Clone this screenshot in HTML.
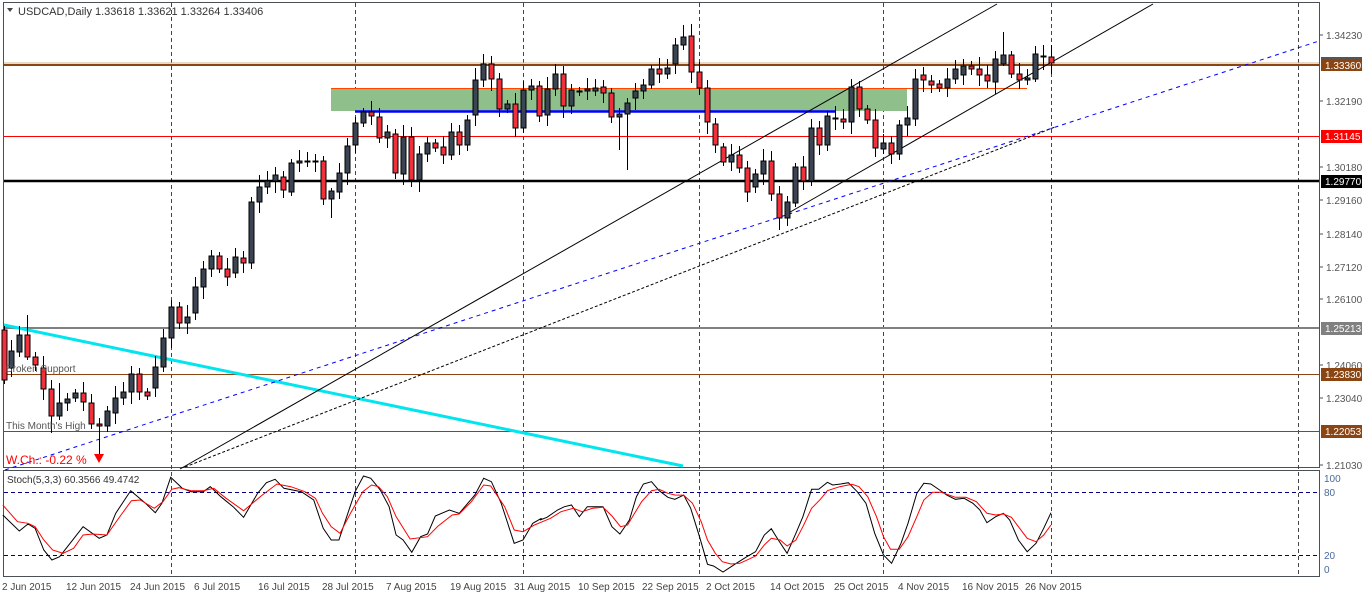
<!DOCTYPE html>
<html><head><meta charset="utf-8"><style>
html,body{margin:0;padding:0;background:#fff;}
svg{display:block;font-family:"Liberation Sans",sans-serif;}
</style></head><body>
<svg id="s" width="1362" height="594" viewBox="0 0 1362 594" xmlns="http://www.w3.org/2000/svg">
<rect width="1362" height="594" fill="#fff"/>
<rect x="3.5" y="2.5" width="1316" height="465" fill="none" stroke="#4a5058"/>
<rect x="3.5" y="470.5" width="1316" height="106" fill="none" stroke="#4a5058"/>
<g stroke="#444" stroke-dasharray="4,3" stroke-width="1">
<line x1="171.5" y1="3" x2="171.5" y2="576"/><line x1="355.5" y1="3" x2="355.5" y2="576"/>
<line x1="523.5" y1="3" x2="523.5" y2="576"/><line x1="699.5" y1="3" x2="699.5" y2="576"/>
<line x1="883.5" y1="3" x2="883.5" y2="576"/><line x1="1051.5" y1="3" x2="1051.5" y2="576"/>
<line x1="1298.5" y1="3" x2="1298.5" y2="576"/>
</g>
<rect x="331" y="88" width="576" height="23" fill="#8fbf8a"/>
<line x1="331" y1="88.5" x2="1027" y2="88.5" stroke="#ff4500" stroke-width="1"/>
<line x1="355" y1="111.5" x2="836" y2="111.5" stroke="#0000ff" stroke-width="2.5"/>
<line x1="4" y1="63" x2="1319" y2="63" stroke="#d2b48c" stroke-width="1"/>
<line x1="4" y1="65" x2="1319" y2="65" stroke="#8b4513" stroke-width="2"/>
<line x1="4" y1="136.5" x2="1319" y2="136.5" stroke="#ff0000" stroke-width="1"/>
<line x1="4" y1="181" x2="1319" y2="181" stroke="#000" stroke-width="2.5"/>
<line x1="4" y1="328" x2="1319" y2="328" stroke="#808080" stroke-width="2"/>
<line x1="4" y1="374.5" x2="1319" y2="374.5" stroke="#8b4513" stroke-width="1"/>
<line x1="4" y1="431.5" x2="1319" y2="431.5" stroke="#8b4513" stroke-width="1"/>
<line x1="4" y1="325" x2="683" y2="466" stroke="#00e5ee" stroke-width="3"/>
<line x1="180" y1="469" x2="997" y2="4" stroke="#000" stroke-width="1"/>
<line x1="785" y1="215" x2="1153" y2="4" stroke="#000" stroke-width="1"/>
<line x1="185" y1="467" x2="1055" y2="127" stroke="#000" stroke-width="1" stroke-dasharray="3,2"/>
<line x1="5" y1="470" x2="1319" y2="41" stroke="#0000ff" stroke-width="1" stroke-dasharray="4,4"/>
<g id="candles"></g>
<path d="M7 8 L13 8 L10 12 Z" fill="#444"/>
<text x="18" y="15" font-size="11" fill="#333">USDCAD,Daily  1.33618 1.33621 1.33264 1.33406</text>
<text x="6" y="372" font-size="10" fill="#555">Broken Support</text>
<text x="6" y="429" font-size="10" fill="#555">This Month's High</text>
<line x1="99.5" y1="424" x2="99.5" y2="456" stroke="#000" stroke-width="1"/>
<path d="M94 454 L104 454 L99 463 Z" fill="#ff0000"/>
<text x="6" y="464" font-size="12" fill="#ff0000">W.Ch.: -0.22 %</text>
<g font-size="10" fill="#555">
<text x="1326" y="39">1.34230</text><text x="1326" y="105">1.32190</text>
<text x="1326" y="171">1.30180</text><text x="1326" y="204">1.29160</text>
<text x="1326" y="238">1.28140</text><text x="1326" y="271">1.27120</text>
<text x="1326" y="303">1.26100</text><text x="1326" y="369">1.24060</text>
<text x="1326" y="402">1.23040</text><text x="1326" y="469">1.21030</text>
</g>
<g stroke="#4a5058"><line x1="1319" y1="35" x2="1323" y2="35"/><line x1="1319" y1="101" x2="1323" y2="101"/><line x1="1319" y1="167" x2="1323" y2="167"/><line x1="1319" y1="200" x2="1323" y2="200"/><line x1="1319" y1="234" x2="1323" y2="234"/><line x1="1319" y1="267" x2="1323" y2="267"/><line x1="1319" y1="299" x2="1323" y2="299"/><line x1="1319" y1="365" x2="1323" y2="365"/><line x1="1319" y1="398" x2="1323" y2="398"/><line x1="1319" y1="465" x2="1323" y2="465"/></g>
<rect x="1321" y="57" width="41" height="3" fill="#555"/>
<rect x="1321" y="59" width="41" height="12" fill="#8b4513"/>
<rect x="1321" y="130" width="41" height="13" fill="#ff0000"/>
<rect x="1321" y="175" width="41" height="13" fill="#000"/>
<rect x="1321" y="322" width="41" height="13" fill="#808080"/>
<rect x="1321" y="368" width="41" height="13" fill="#8b4513"/>
<rect x="1321" y="425" width="41" height="13" fill="#8b4513"/>
<g font-size="10" fill="#fff">
<text x="1325" y="69">1.33360</text><text x="1325" y="140">1.31145</text>
<text x="1325" y="185">1.29770</text><text x="1325" y="332">1.25213</text>
<text x="1325" y="378">1.23830</text><text x="1325" y="435">1.22053</text>
</g>
<line x1="4" y1="492.5" x2="1319" y2="492.5" stroke="#000080" stroke-dasharray="4,3"/>
<line x1="4" y1="555.5" x2="1319" y2="555.5" stroke="#000080" stroke-dasharray="4,3"/>
<polyline id="k" fill="none" stroke="#000" stroke-width="1"/>
<polyline id="d" fill="none" stroke="#ff0000" stroke-width="1"/>
<text x="7" y="483" font-size="10" fill="#333">Stoch(5,3,3) 60.3566 49.4742</text>
<g font-size="10" fill="#4a6a9a"><text x="1324" y="482">100</text><text x="1324" y="496">80</text><text x="1324" y="559">20</text><text x="1324" y="573">0</text></g>
<g font-size="10" fill="#444">
<text x="2" y="590">2 Jun 2015</text><text x="66" y="590">12 Jun 2015</text><text x="130" y="590">24 Jun 2015</text>
<text x="194" y="590">6 Jul 2015</text><text x="258" y="590">16 Jul 2015</text><text x="322" y="590">28 Jul 2015</text>
<text x="386" y="590">7 Aug 2015</text><text x="450" y="590">19 Aug 2015</text><text x="514" y="590">31 Aug 2015</text>
<text x="578" y="590">10 Sep 2015</text><text x="642" y="590">22 Sep 2015</text><text x="706" y="590">2 Oct 2015</text>
<text x="770" y="590">14 Oct 2015</text><text x="834" y="590">25 Oct 2015</text><text x="898" y="590">4 Nov 2015</text>
<text x="962" y="590">16 Nov 2015</text><text x="1025" y="590">26 Nov 2015</text>
</g>
</svg>
<script>
var C=[[4,330,380,1],[11,351,368,0],[19,335,352,0],[27,335,357,1],[35,357,365,1],[43,368,389,1],[51,389,416,1],[59,403,416,0],[67,399,403,0],[75,393,398,0],[83,393,402,1],[91,403,424,1],[99,424,426,1],[107,411,426,0],[115,398,413,0],[123,392,398,0],[131,374,392,0],[139,374,392,1],[147,392,396,1],[155,367,388,0],[163,338,367,0],[171,307,338,0],[179,307,323,1],[187,317,323,0],[195,287,313,0],[203,269,287,0],[211,256,269,0],[219,256,269,1],[227,269,277,1],[235,257,273,0],[243,258,263,1],[251,202,263,0],[259,187,202,0],[267,181,187,0],[275,175,181,0],[283,177,190,1],[291,163,192,0],[299,161,163,0],[307,161,162,0],[315,161,162,0],[323,161,199,1],[331,191,199,0],[339,173,192,0],[347,146,173,0],[355,123,145,0],[363,112,123,0],[371,112,116,1],[379,117,138,1],[387,132,138,0],[395,134,173,1],[403,137,174,0],[411,137,180,1],[419,154,180,0],[427,143,154,0],[435,143,148,1],[443,147,155,1],[451,132,155,0],[459,132,145,1],[467,120,145,0],[475,80,115,0],[483,64,80,0],[491,64,79,1],[499,79,109,1],[507,104,109,0],[515,104,128,1],[523,90,128,0],[531,86,90,0],[539,86,116,1],[547,89,115,0],[555,74,89,0],[563,74,106,1],[571,90,106,0],[579,91,92,0],[587,89,91,0],[595,88,91,0],[603,87,93,1],[611,93,117,1],[619,114,117,0],[627,103,114,0],[635,91,98,0],[643,85,91,0],[651,69,85,0],[659,69,74,1],[667,68,74,0],[675,45,64,0],[683,37,45,0],[691,36,72,1],[699,72,88,1],[707,88,122,1],[715,124,145,1],[723,147,162,1],[731,155,162,0],[739,155,168,1],[747,168,192,1],[755,174,187,0],[763,161,174,0],[771,161,194,1],[779,194,218,1],[787,202,218,0],[795,167,203,0],[803,167,181,1],[811,128,181,0],[819,128,145,1],[827,116,145,0],[835,118,119,0],[843,119,122,1],[851,87,122,0],[859,87,109,1],[867,109,120,1],[875,120,148,1],[883,143,149,0],[891,143,154,1],[899,125,154,0],[907,118,125,0],[915,79,119,0],[923,75,80,1],[931,81,85,1],[939,84,88,1],[947,79,88,0],[955,69,79,0],[963,66,75,0],[971,66,69,1],[979,69,75,1],[987,75,81,1],[995,59,82,0],[1003,55,64,0],[1011,55,74,1],[1019,74,80,1],[1027,78,80,0],[1035,54,79,0],[1043,56,57,0],[1051,57,63,1]];
var W={3:[318,383],27:[315,360],51:[380,433],59:[383,420],99:[418,453],331:[188,218],619:[108,150],627:[98,170],683:[25,50],1003:[32,66],1043:[45,70],1035:[46,82]};
var g=document.getElementById('candles'),h='';
C.forEach(function(c,i){var x=c[0],t=c[1],b=c[2],r=c[3];var hi=t-4-((i*7)%9),lo=b+4+((i*5)%9);if(W[x]){hi=W[x][0];lo=W[x][1];}
h+='<line x1="'+(x+.5)+'" y1="'+hi+'" x2="'+(x+.5)+'" y2="'+lo+'" stroke="#000"/>';
if(b-t<2){h+='<line x1="'+(x-2.5)+'" y1="'+(t+.5)+'" x2="'+(x+3.5)+'" y2="'+(t+.5)+'" stroke="#000" stroke-width="2"/>';}
else h+='<rect x="'+(x-2)+'" y="'+t+'" width="5" height="'+(b-t)+'" fill="'+(r?'#f0313c':'#3a4452')+'" stroke="#000" stroke-width="1"/>';});
g.innerHTML=h;
var K7=[[8,165],[55,213],[80,192],[100,205],[125,270],[148,300],[170,290],[237,200],[283,235],[305,225],[330,160],[373,92],[415,130],[443,158],[462,130],[487,52],[520,85],[545,95],[580,95],[600,80],[630,110],[665,140],[695,172],[735,100],[760,68],[785,58],[810,85],[860,95],[895,120],[922,205],[945,240],[967,240],[1013,95],[1037,48],[1058,55],[1085,90],[1110,140],[1130,225],[1150,240],[1175,277],[1200,230],[1220,222],[1242,168],[1282,150],[1310,160],[1355,105],[1380,55],[1402,65],[1430,130],[1467,250],[1492,240],[1520,190],[1545,175]];
var D7=[[8,135],[50,185],[80,190],[100,200],[125,240],[150,270],[180,280],[210,265],[237,225],[265,222],[305,225],[335,180],[375,122],[400,120],[440,145],[465,125],[490,88],[510,83],[545,92],[580,92],[610,85],[645,115],[695,152],[745,108],[790,72],[830,80],[870,95],[900,115],[920,160],[945,200],[970,220],[1000,160],[1035,95],[1060,75],[1080,80],[1105,110],[1130,170],[1170,237],[1220,230],[1250,198],[1290,165],[1310,162],[1345,125],[1380,75],[1400,78],[1440,140],[1467,210],[1492,215],[1525,195]];
var K8=[[0,180],[20,172],[50,150],[70,140],[90,135],[112,170],[135,140],[180,140],[205,200],[228,222],[255,180],[275,110],[295,72],[318,65],[340,92],[365,112],[385,118],[410,105],[430,145],[455,230],[478,313],[495,318],[522,336],[560,310],[590,290],[615,275],[640,225],[660,206],[680,240],[705,280],[730,220],[750,170],[775,88],[795,88],[820,67],[835,75],[858,72],[880,68],[905,95],[930,130],[955,220],[980,285],[1003,310],[1030,250],[1050,190],[1075,100],[1095,70],[1115,72],[1140,90],[1160,105],[1185,118],[1210,115],[1235,130],[1255,150],[1275,188],[1300,170],[1322,160],[1340,180],[1365,240],[1390,275],[1415,250],[1437,205],[1458,158]];
var D8=[[0,188],[30,175],[60,155],[95,145],[120,155],[150,145],[180,142],[205,168],[230,200],[250,195],[270,160],[290,125],[318,92],[340,88],[365,100],[385,105],[410,106],[435,130],[460,185],[478,240],[500,280],[520,305],[545,312],[570,310],[595,298],[615,288],[640,255],[660,235],[685,240],[705,258],[730,240],[750,200],[775,145],[800,118],[820,92],[855,80],[890,73],[910,80],[935,110],[960,170],[980,230],[1000,268],[1025,268],[1050,230],[1075,170],[1095,120],[1120,97],[1145,97],[1185,112],[1215,112],[1245,125],[1275,160],[1300,165],[1322,162],[1345,172],[1365,200],[1390,235],[1415,245],[1437,225],[1458,195]];
function m(a,ox){return a.map(function(p){return (ox+p[0]/2.853).toFixed(1)+','+(460+p[1]/3).toFixed(1);}).join(' ');}
document.getElementById('k').setAttribute('points',m(K7,0)+' '+m(K8,540));
document.getElementById('d').setAttribute('points',m(D7,0)+' '+m(D8,540));
</script>
</body></html>
